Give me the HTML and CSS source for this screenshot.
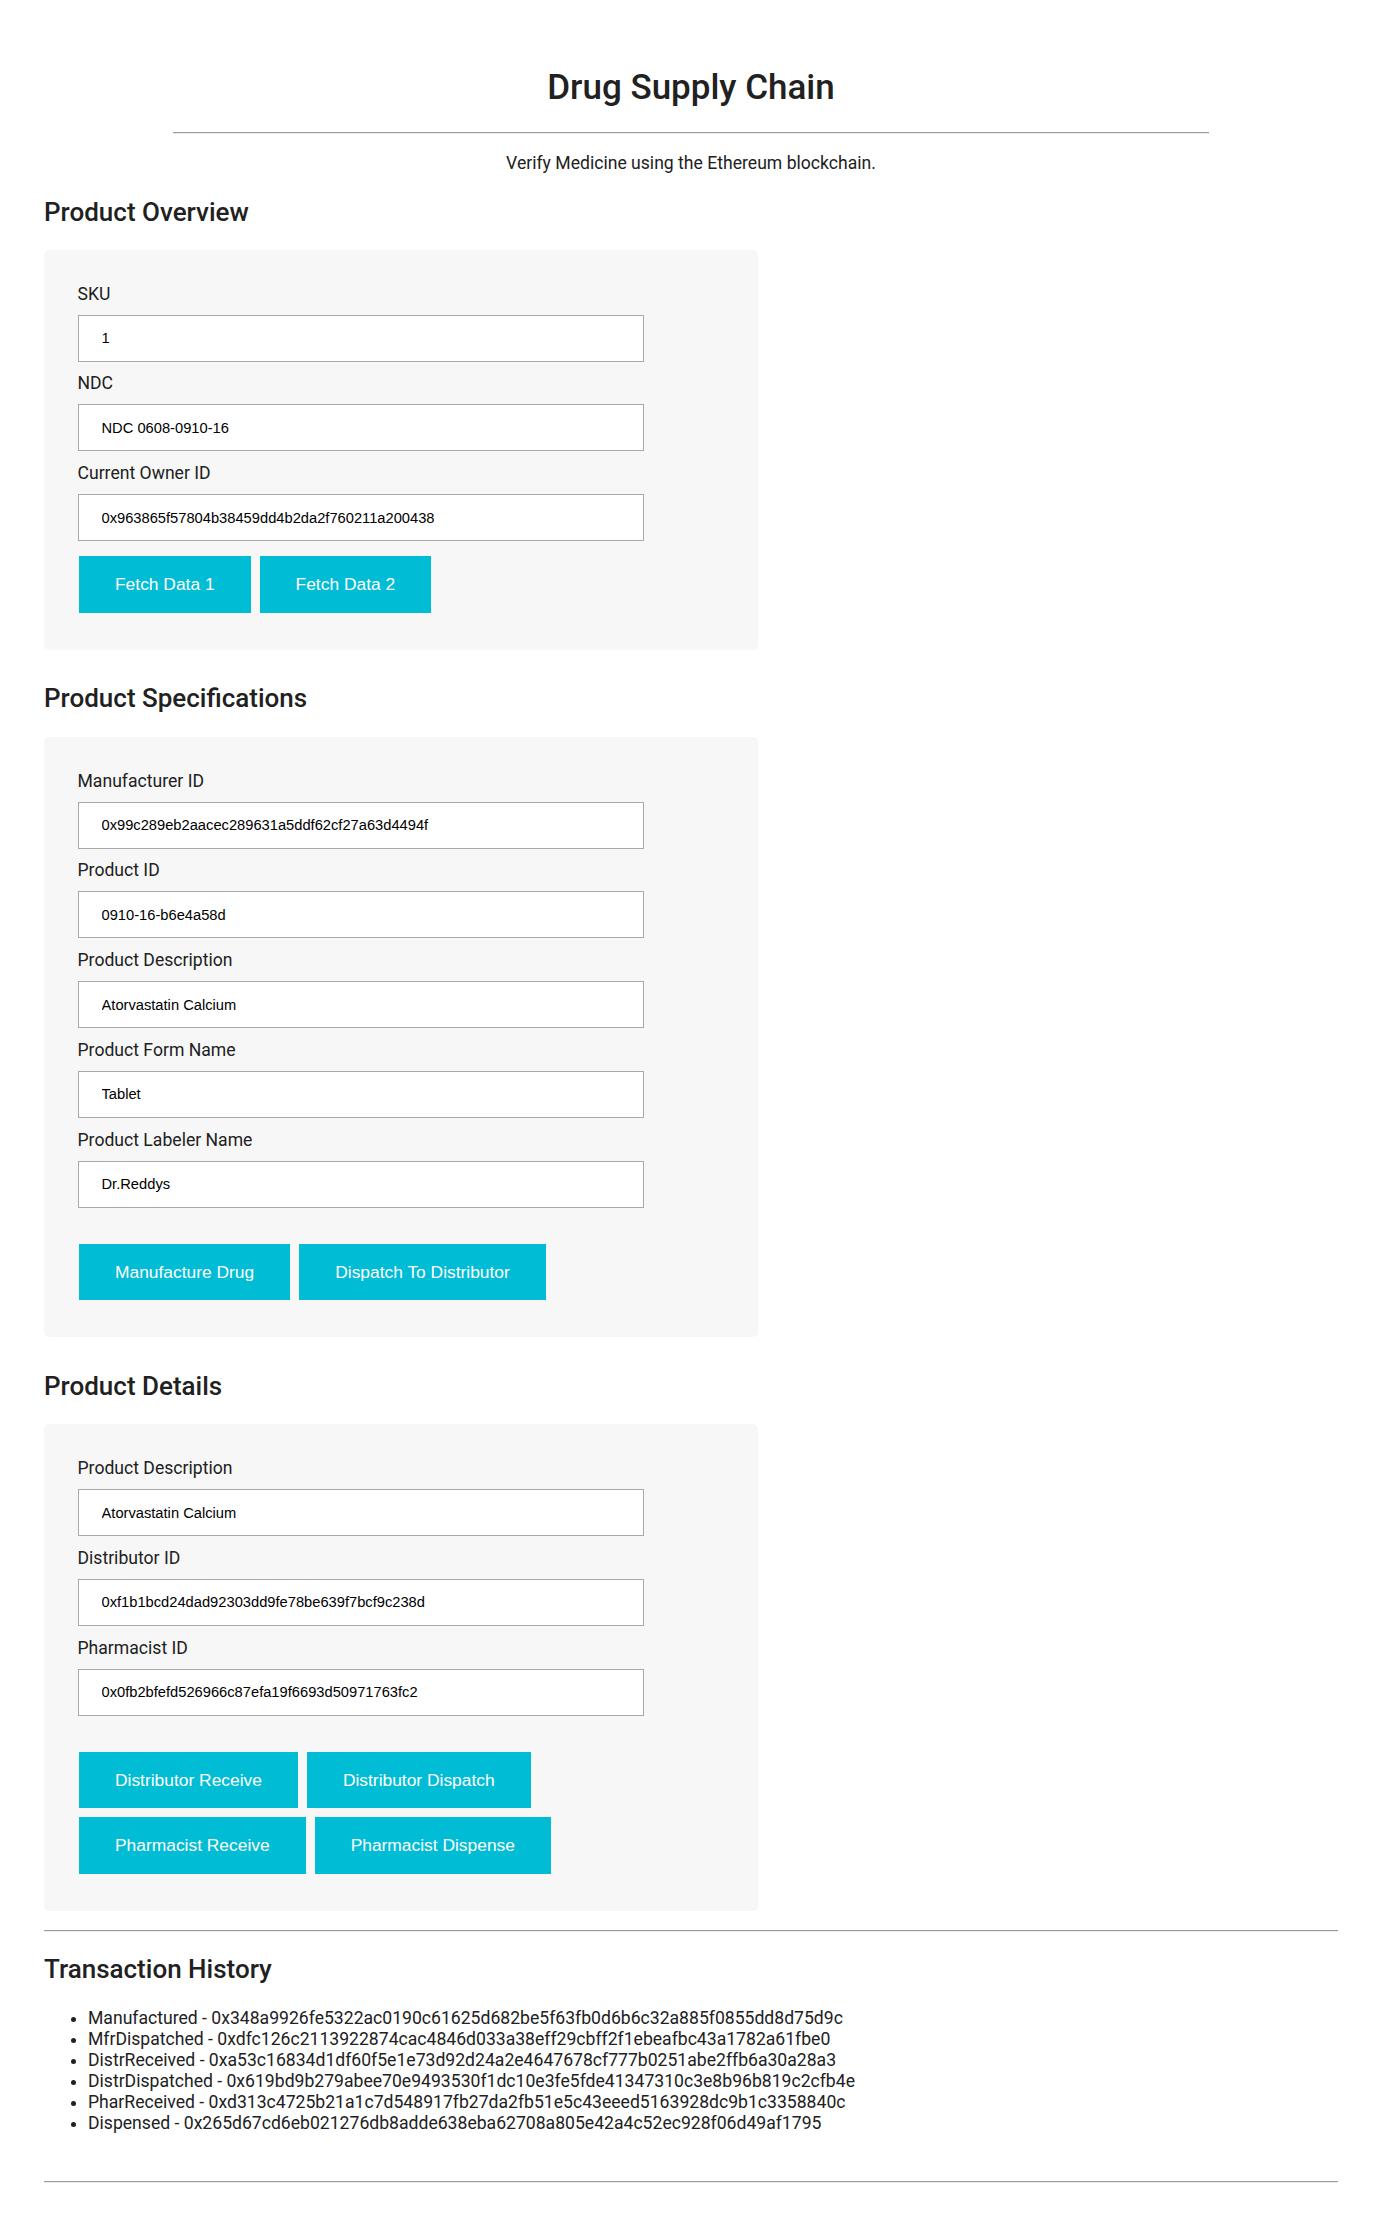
FILE: index.html
```html
<!DOCTYPE html>
<html lang="en">
<head>
<meta charset="utf-8">
<title>Drug Supply Chain</title>
<link rel="stylesheet" href="styles.css">
</head>
<body>
<div class="page">
  <h1 class="title">Drug Supply Chain</h1>
  <hr class="title-rule">
  <p class="subtitle">Verify Medicine using the Ethereum blockchain.</p>

  <h2 class="section-title first">Product Overview</h2>
  <div class="panel">
    <label class="field-label">SKU</label>
    <input class="field-input" type="text" value="1">
    <label class="field-label">NDC</label>
    <input class="field-input" type="text" value="NDC 0608-0910-16">
    <label class="field-label">Current Owner ID</label>
    <input class="field-input" type="text" value="0x963865f57804b38459dd4b2da2f760211a200438">
    <div class="btn-row tight">
      <button class="btn">Fetch Data 1</button>
      <button class="btn">Fetch Data 2</button>
    </div>
  </div>

  <h2 class="section-title">Product Specifications</h2>
  <div class="panel">
    <label class="field-label">Manufacturer ID</label>
    <input class="field-input" type="text" value="0x99c289eb2aacec289631a5ddf62cf27a63d4494f">
    <label class="field-label">Product ID</label>
    <input class="field-input" type="text" value="0910-16-b6e4a58d">
    <label class="field-label">Product Description</label>
    <input class="field-input" type="text" value="Atorvastatin Calcium">
    <label class="field-label">Product Form Name</label>
    <input class="field-input" type="text" value="Tablet">
    <label class="field-label">Product Labeler Name</label>
    <input class="field-input" type="text" value="Dr.Reddys">
    <div class="btn-row">
      <button class="btn">Manufacture Drug</button>
      <button class="btn">Dispatch To Distributor</button>
    </div>
  </div>

  <h2 class="section-title">Product Details</h2>
  <div class="panel last">
    <label class="field-label">Product Description</label>
    <input class="field-input" type="text" value="Atorvastatin Calcium">
    <label class="field-label">Distributor ID</label>
    <input class="field-input" type="text" value="0xf1b1bcd24dad92303dd9fe78be639f7bcf9c238d">
    <label class="field-label">Pharmacist ID</label>
    <input class="field-input" type="text" value="0x0fb2bfefd526966c87efa19f6693d50971763fc2">
    <div class="btn-row">
      <button class="btn">Distributor Receive</button>
      <button class="btn">Distributor Dispatch</button>
    </div>
    <div class="btn-row second">
      <button class="btn">Pharmacist Receive</button>
      <button class="btn">Pharmacist Dispense</button>
    </div>
  </div>

  <hr class="rule">
  <h2 class="section-title history-title">Transaction History</h2>
  <ul class="history">
    <li>Manufactured - 0x348a9926fe5322ac0190c61625d682be5f63fb0d6b6c32a885f0855dd8d75d9c</li>
    <li>MfrDispatched - 0xdfc126c2113922874cac4846d033a38eff29cbff2f1ebeafbc43a1782a61fbe0</li>
    <li>DistrReceived - 0xa53c16834d1df60f5e1e73d92d24a2e4647678cf777b0251abe2ffb6a30a28a3</li>
    <li>DistrDispatched - 0x619bd9b279abee70e9493530f1dc10e3fe5fde41347310c3e8b96b819c2cfb4e</li>
    <li>PharReceived - 0xd313c4725b21a1c7d548917fb27da2fb51e5c43eeed5163928dc9b1c3358840c</li>
    <li>Dispensed - 0x265d67cd6eb021276db8adde638eba62708a805e42a4c52ec928f06d49af1795</li>
  </ul>
  <hr class="rule bottom">
</div>
</body>
</html>
```

FILE: styles.css
```css
* {
  box-sizing: border-box;
}

html, body {
  margin: 0;
  padding: 0;
  background: #ffffff;
}

body {
  font-family: Roboto, "Noto Sans", "Liberation Sans", sans-serif;
  color: #212121;
}

.page {
  padding: 67px 36px 40px 44px;
  width: 1374px;
}

.title {
  margin: 0;
  font-size: 35px;
  line-height: 42px;
  font-weight: 500;
  text-align: center;
  color: #212121;
}

.title-rule {
  width: 80%;
  margin: 23px auto 0 auto;
  height: 0;
  border: 0;
  border-top: 1px solid #9a9a9a;
  border-bottom: 1px solid #ececec;
}

.subtitle {
  margin: 19px 0 0 0;
  font-size: 17.6px;
  line-height: 21px;
  text-align: center;
}

.section-title {
  margin: 0 0 23.5px 0;
  font-size: 26px;
  line-height: 30px;
  font-weight: 500;
  color: #212121;
}

.section-title.first {
  margin-top: 23px;
  margin-bottom: 22.5px;
}

.panel {
  width: 714px;
  background: #f7f7f7;
  border-radius: 5px;
  padding: 34px 33.5px 37px 33.5px;
  margin-bottom: 33.5px;
}

.panel.last {
  margin-bottom: 19px;
}

.field-label {
  display: block;
  font-size: 17.6px;
  line-height: 21px;
  margin-bottom: 10px;
  color: #212121;
}

.field-input {
  display: block;
  width: 566.5px;
  height: 47px;
  margin: 0 0 11.75px 0;
  padding: 0 10px 0 23px;
  border: 1px solid #a9a9a9;
  border-radius: 0;
  background: #ffffff;
  font-family: "Liberation Sans", Arial, sans-serif;
  font-size: 14.7px;
  color: #000000;
  outline: none;
}

.btn-row {
  display: flex;
  gap: 9px;
  margin: 36px 0 0 1.5px;
}

.btn-row.tight {
  margin-top: 15px;
}

.btn-row.second {
  margin-top: 9px;
}

.btn {
  border: 0;
  margin: 0;
  background: #00bcd4;
  color: #ffffff;
  font-family: "Liberation Sans", Arial, sans-serif;
  font-size: 17.4px;
  line-height: 20.5px;
  padding: 18px 36px;
  cursor: pointer;
}

.rule {
  width: 100%;
  height: 0;
  margin: 0;
  border: 0;
  border-top: 1px solid #9a9a9a;
  border-bottom: 1px solid #ececec;
}

.history-title {
  margin-top: 22.5px;
  margin-bottom: 23.5px;
}

.history {
  margin: 0;
  padding-left: 44px;
  font-size: 17.6px;
  line-height: 21px;
  color: #212121;
}

.rule.bottom {
  margin-top: 47.5px;
}
```
